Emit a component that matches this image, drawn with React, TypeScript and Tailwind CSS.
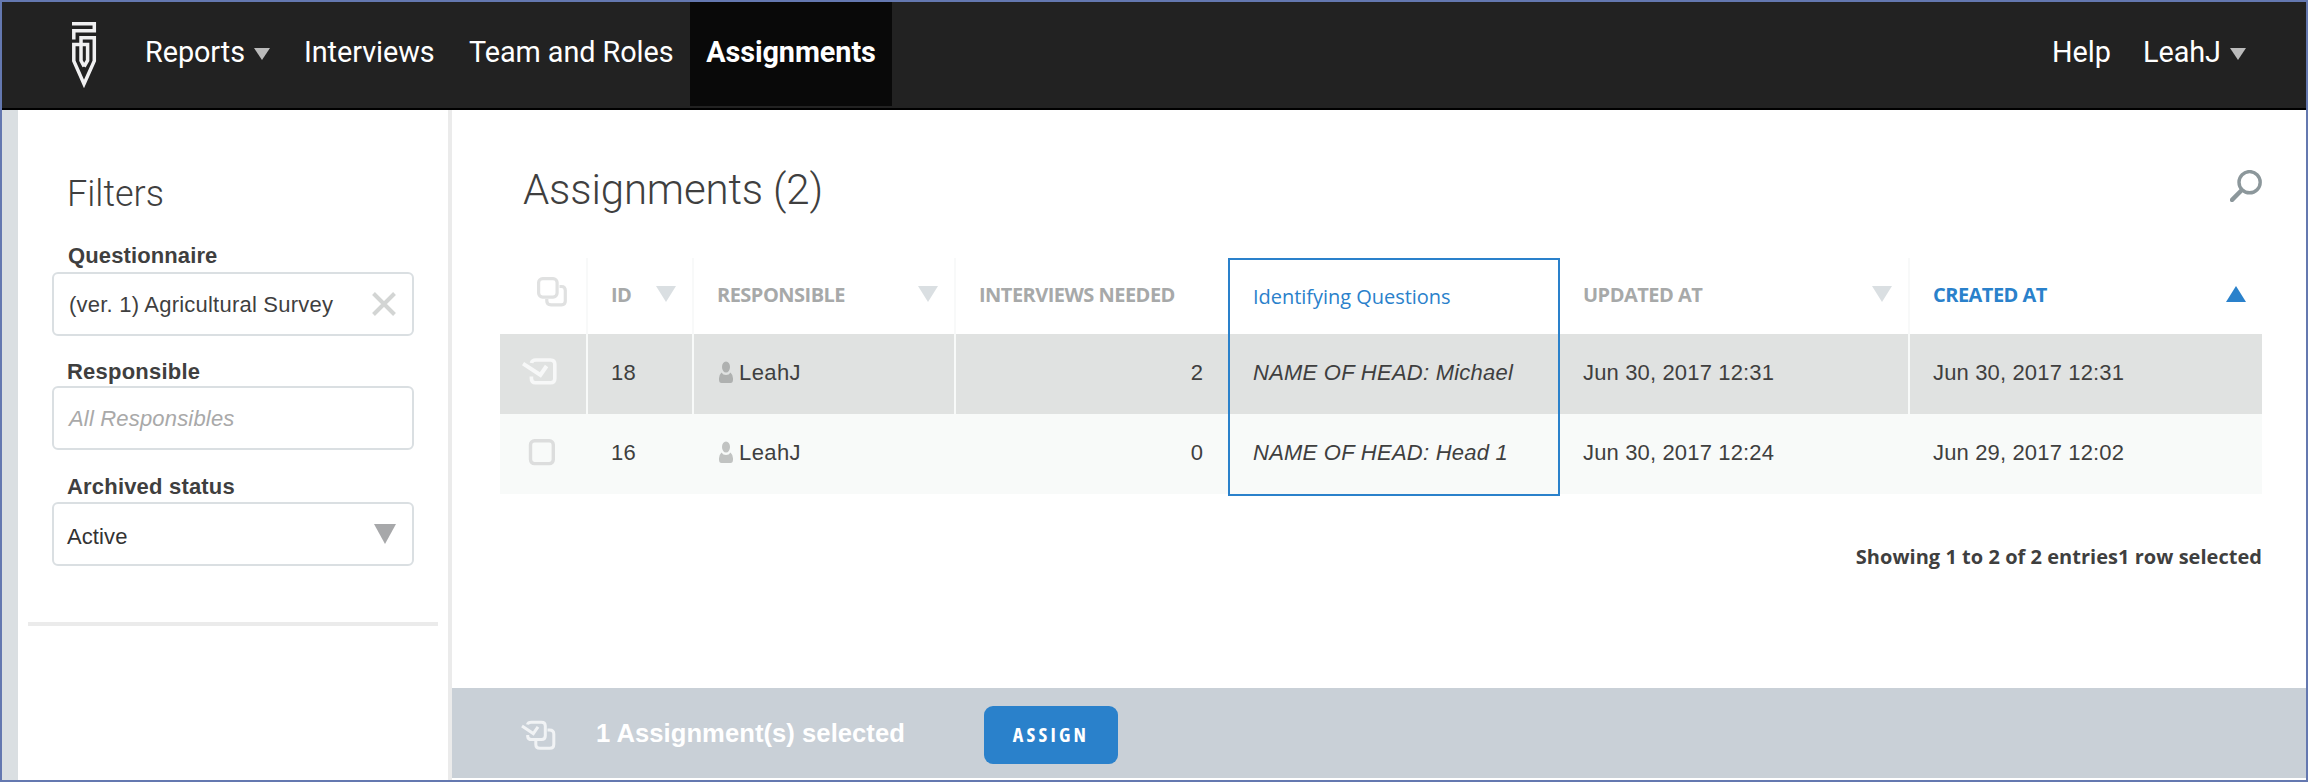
import type { ReactNode } from "react";

const treb = "font-['Open_Sans',sans-serif] text-[20px]";

function Triangle({ className, up = false }: { className: string; up?: boolean }) {
  return (
    <svg className={className} viewBox="0 0 20 16" preserveAspectRatio="none" fill="currentColor">
      <path d={up ? "M0 16H20L10 0Z" : "M0 0H20L10 16Z"} />
    </svg>
  );
}

function Logo() {
  return (
    <svg width="24" height="66" viewBox="0 0 24 66" fill="none" stroke="#f0f0f1" strokeWidth="3.5" className="overflow-visible">
      <path d="M0 1.8H22.3V8.7H1.8V17.4" />
      <path d="M12.1 44.5L9 38.5V15.8H22.3V39L12 62L1.8 39V22.5H15.6V38.5L12.1 44.5" />
    </svg>
  );
}

function SelectAllIcon() {
  return (
    <svg width="30" height="30" viewBox="0 0 30 30" fill="none" stroke="#e0e1e1" strokeWidth="3.2">
      <rect x="1.6" y="1.6" width="18.5" height="18.5" rx="4" />
      <path d="M22.5 9.5H24.5Q28.3 9.5 28.3 13.5V24Q28.3 27.8 24.5 27.8H14Q9.8 27.8 9.8 24V22" />
    </svg>
  );
}

function CheckedIcon() {
  return (
    <svg width="36" height="28" viewBox="0 0 36 28" fill="none" stroke="#f7f8f8" strokeWidth="3.6">
      <path d="M9.5 5Q10 2 14 2H28.5Q32.8 2 32.8 6.3V20.5Q32.8 24.8 28.5 24.8H13.5Q9.4 24.8 9.4 20.5V18.5" />
      <path d="M1 5.6L18.4 17L24.6 8" strokeWidth="4" />
    </svg>
  );
}

function UncheckedIcon() {
  return (
    <svg width="36" height="28" viewBox="0 0 36 28" fill="none" stroke="#dcdddd" strokeWidth="3.4">
      <rect x="8.5" y="2.8" width="22.8" height="22.8" rx="4" />
    </svg>
  );
}

function SelectedStackIcon() {
  return (
    <svg width="36" height="32" viewBox="0 0 36 32" fill="none" stroke="#f1f3f5" strokeWidth="3">
      <path d="M6.5 4.5Q7 2.3 10.5 2.3H20.5Q24.3 2.3 24.3 6V15.8Q24.3 19.6 20.5 19.6H10.5Q7 19.6 6.7 16.5V15" />
      <path d="M26.5 10H28.5Q32.8 10 32.8 14V24.3Q32.8 28.3 28.8 28.3H19Q14.8 28.3 14.8 24.3V21" />
      <path d="M1 6L12.3 13.6L17 6.8" strokeWidth="3" />
    </svg>
  );
}

function PersonIcon() {
  return (
    <svg width="14" height="22" viewBox="0 0 14 22" fill="currentColor">
      <ellipse cx="7" cy="6" rx="4" ry="5.5" />
      <path d="M2.5 11.5Q4 14 7 14Q10 14 11.5 11.5Q14.2 14 14 18.5Q14 22 11.5 22H2.5Q0 22 0 18.5Q-0.2 14 2.5 11.5Z" />
    </svg>
  );
}

function FilterBox({ children }: { children: ReactNode }) {
  return (
    <div className="flex h-16 w-[362px] items-center justify-between rounded-[6px] border-2 border-[#dadfe2] bg-white pr-4 pl-[15px] text-[22px]">
      {children}
    </div>
  );
}

const grid = "grid grid-cols-[88px_106px_262px_272px_332px_350px_352px]";

type Row = { id: string; who: string; needed: string; head: string; updated: string; created: string; selected: boolean };

const rows: Row[] = [
  { id: "18", who: "LeahJ", needed: "2", head: "NAME OF HEAD: Michael", updated: "Jun 30, 2017 12:31", created: "Jun 30, 2017 12:31", selected: true },
  { id: "16", who: "LeahJ", needed: "0", head: "NAME OF HEAD: Head 1", updated: "Jun 30, 2017 12:24", created: "Jun 29, 2017 12:02", selected: false },
];

function HeadCell({ label, sort, border = true, active = false }: { label: string; sort?: "down" | "up"; border?: boolean; active?: boolean }) {
  return (
    <div className={`${treb} flex items-center justify-between pr-4 pl-[23px] font-bold tracking-[-0.52px] ${border ? "border-r-2 border-[#f8f9f9]" : ""} ${active ? "text-[#2a81cb]" : "text-[#a7a9a9]"}`}>
      <span className="pb-0.5">{label}</span>
      {sort === "down" && <Triangle className="h-4 w-5 -translate-y-0.5 text-[#dadfe2]" />}
      {sort === "up" && <Triangle up className="h-4 w-5 -translate-y-0.5 text-[#2a81cb]" />}
    </div>
  );
}

function TableRow({ row }: { row: Row }) {
  const line = row.selected ? "border-r-2 border-[#f8faf9]" : "border-r-2 border-transparent";
  const cell = "flex items-center pb-[4px] pl-[23px] tracking-[0.15px]";
  return (
    <div className={`${grid} h-20 text-[22px] ${row.selected ? "bg-[#e0e2e1]" : "bg-[#f8faf9]"}`}>
      <div className={`flex items-center pb-1 pl-[22px] ${line}`}>{row.selected ? <CheckedIcon /> : <UncheckedIcon />}</div>
      <div className={`${cell} ${line}`}>{row.id}</div>
      <div className={`flex items-center gap-[6px] pb-[4px] pl-[25px] tracking-[0.4px] ${line}`}>
        <span className={row.selected ? "text-[#afb1b0]" : "text-[#c1c3c2]"}><PersonIcon /></span>
        {row.who}
      </div>
      <div className="flex items-center justify-end pr-[25px] pb-[4px]">{row.needed}</div>
      <div className="flex items-center pb-[4px] pl-[25px] tracking-[0.24px] italic">{row.head}</div>
      <div className={`${cell} ${line}`}>{row.updated}</div>
      <div className={cell}>{row.created}</div>
    </div>
  );
}

export default function App() {
  return (
    <div className="flex h-[782px] w-[2308px] flex-col overflow-hidden border-2 border-[#6478b0] bg-white font-['Liberation_Sans',Arial,sans-serif] whitespace-nowrap text-[#3f3f3f]">
      <header className="flex h-[108px] shrink-0 justify-between border-b-2 border-black bg-[#222222] pb-0.5 font-['Roboto',sans-serif] text-[28.8px] tracking-[-0.06px] text-white">
        <div className="flex h-[104px] items-stretch">
          <div className="w-[142px] pt-5 pl-[70px]"><Logo /></div>
          <nav className="flex">
            <div className="flex w-[160px] items-center pb-0.5">
              <span className="w-[110px] pl-px">Reports</span>
              <Triangle className="mt-0.5 h-3 w-4 text-[#bbbbbb]" />
            </div>
            <div className="flex w-[165px] items-center pb-0.5">Interviews</div>
            <div className="flex w-[221px] items-center pb-0.5">Team and Roles</div>
            <div className="flex w-[202px] items-center justify-center bg-[#090909] pb-0.5 font-bold">Assignments</div>
          </nav>
        </div>
        <div className="flex h-[104px] items-center pr-[60px] pb-0.5">
          <span className="w-[92px] pl-px">Help</span>
          <span className="w-[87px]">LeahJ</span>
          <Triangle className="mt-0.5 h-3 w-4 text-[#bbbbbb]" />
        </div>
      </header>

      <div className="flex min-h-0 flex-1">
        <aside className="w-[450px] shrink-0 border-r-4 border-l-16 border-r-[#ebebeb] border-l-[#dadfe2] px-[10px] pt-[64px]">
          <div className="px-6">
            <h2 className="pl-[15px] font-['Roboto',sans-serif] text-[36px] leading-10 font-light">Filters</h2>
            <div className="mt-[30px] mb-1 pl-4 text-[22px] leading-6 font-bold tracking-[0.12px]">Questionnaire</div>
            <FilterBox>
              <span className="tracking-[0.22px]">(ver. 1) Agricultural Survey</span>
              <svg width="24" height="24" viewBox="0 0 24 24" stroke="#d3d5d4" strokeWidth="4"><path d="M1.5 1.5L22.5 22.5M22.5 1.5L1.5 22.5" /></svg>
            </FilterBox>
            <div className="mt-6 mb-0.5 pl-[15px] text-[22px] leading-6 font-bold tracking-[0.22px]">Responsible</div>
            <FilterBox>
              <span className="tracking-[0.18px] text-[#a9a9a9] italic">All Responsibles</span>
            </FilterBox>
            <div className="mt-[25px] mb-[3px] pl-[15px] text-[22px] leading-6 font-bold tracking-[0.19px]">Archived status</div>
            <FilterBox>
              <span className="-ml-0.5 pt-1 tracking-[0.1px] text-[#333333]">Active</span>
              <Triangle className="h-5 w-[22px] text-[#a7a8aa]" />
            </FilterBox>
          </div>
          <div className="mt-14 h-1 bg-[#ebebeb]" />
        </aside>

        <main className="flex min-w-0 flex-1 flex-col">
          <div className="flex items-start justify-between pt-[55px] pr-11 pl-[71px]">
            <h1 className="pt-px font-['Roboto',sans-serif] text-[42px] leading-[48px] font-light tracking-[-0.14px]">Assignments (2)</h1>
            <svg width="32" height="32" viewBox="0 0 32 32" fill="none" stroke="#8c979b" className="mt-[5px]">
              <circle cx="19.6" cy="12.2" r="10.6" strokeWidth="3.4" />
              <path d="M12.3 19.5L0.5 31.5" strokeWidth="4.4" />
            </svg>
          </div>

          <div className="relative mt-[44px] ml-12 w-[1762px]">
            <div className={`${grid} h-[76px]`}>
              <div className="flex items-center border-r-2 border-[#f8f9f9] pb-2 pl-[37px]"><SelectAllIcon /></div>
              <HeadCell label="ID" sort="down" />
              <HeadCell label="RESPONSIBLE" sort="down" />
              <HeadCell label="INTERVIEWS NEEDED" border={false} />
              <div className={`${treb} flex items-center pt-0.5 pl-[25px] font-medium tracking-[-0.03px] text-[#2a81cb]`}>Identifying Questions</div>
              <HeadCell label="UPDATED AT" sort="down" />
              <HeadCell label="CREATED AT" sort="up" border={false} active />
            </div>
            {rows.map((row) => <TableRow key={row.id} row={row} />)}
            <div className="absolute top-0 left-[728px] h-[238px] w-[332px] border-2 border-[#2a81cb]" />
          </div>

          <div className={`${treb} mt-[49px] pr-11 text-right leading-7 font-bold tracking-[0.03px]`}>Showing 1 to 2 of 2 entries1 row selected</div>

          <div className="mt-auto mb-0.5 flex h-[90px] items-center bg-[#c9d0d7]">
            <div className="w-[144px] pt-1.5 pl-[69px]"><SelectedStackIcon /></div>
            <div className="w-[388px] text-[25.6px] font-bold tracking-[0.05px] text-white">1 Assignment(s) selected</div>
            <div className={`${treb} mt-1 flex h-[58px] w-[134px] items-center justify-center rounded-[9px] bg-[#2a81cb] font-bold tracking-[3.2px] text-white [font-stretch:75%]`}>ASSIGN</div>
          </div>
        </main>
      </div>
    </div>
  );
}
